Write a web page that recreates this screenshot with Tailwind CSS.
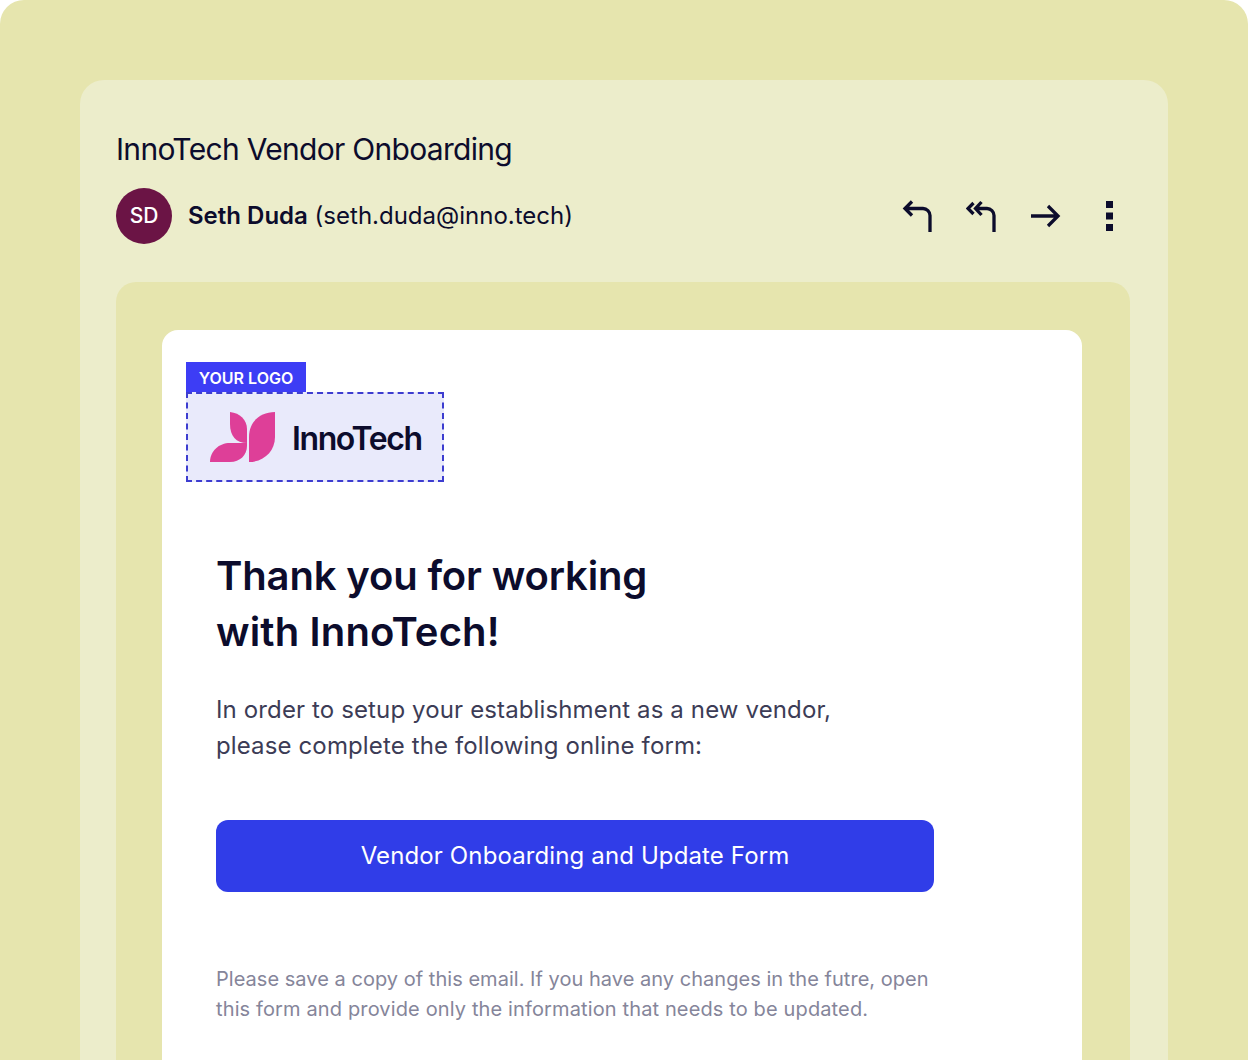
<!DOCTYPE html>
<html lang="en">
<head>
  <meta charset="UTF-8" />
  <meta name="viewport" content="width=device-width, initial-scale=1.0" />
  <title>InnoTech Vendor Onboarding</title>
  <script src="https://cdn.jsdelivr.net/npm/@tailwindcss/browser@4"></script>
</head>
<body class="bg-white font-['Inter',sans-serif] text-[#0c0c2c]">
  <div class="h-[1060px] overflow-hidden rounded-t-3xl bg-[#e6e5ae] px-20 pt-20">
    <div class="h-[1100px] rounded-t-3xl bg-[#ecedcb] px-9 pt-[47px]">
      <h1 class="text-[30px] leading-[44px] tracking-[-0.7px]">InnoTech Vendor Onboarding</h1>

      <!-- sender row -->
      <div class="mt-[17px] flex h-14 items-center pr-1.5">
        <div class="flex h-14 w-14 items-center justify-center rounded-full bg-[#6b1445] text-[21px] font-medium text-white">SD</div>
        <p class="ml-4 text-2xl"><span class="font-semibold">Seth Duda</span> (seth.duda@inno.tech)</p>
        <div class="ml-auto flex items-center">
          <svg class="h-8 w-8" viewBox="0 0 32 32" fill="none" stroke="#0c0c2c" stroke-width="3.300">
            <path d="M10 1.500 3 8.500 10 15.500M4 8.500h17a7 7 0 0 1 7 7V32" />
          </svg>
          <svg class="ml-8 h-8 w-8" viewBox="0 0 32 32" fill="none" stroke="#0c0c2c" stroke-width="3.300">
            <path d="M7.500 3 2 8.500 7.500 14M15.500 2 9.500 8.500 15.500 15M10 8.500h11a7 7 0 0 1 7 7V32" />
          </svg>
          <svg class="ml-8 h-8 w-8" viewBox="0 0 32 32" fill="none" stroke="#0c0c2c" stroke-width="3.300">
            <path d="M1 16h27M18 6l10 10-10 10" />
          </svg>
          <svg class="ml-8 h-8 w-8" viewBox="0 0 32 32" fill="#0c0c2c">
            <path d="M12 1h7v7h-7zM12 12.500h7v7h-7zM12 24h7v7h-7z" />
          </svg>
        </div>
      </div>

      <!-- email preview -->
      <div class="mt-[38px] h-[800px] w-[1014px] rounded-t-[20px] bg-[#e6e5ae] pr-12 pl-[46px] pt-12">
        <div class="h-[760px] rounded-t-2xl bg-white pl-6 pt-8">
          <div class="w-[120px] bg-[#3d3df5] py-[5px] text-center text-base leading-[22px] font-semibold text-white">YOUR LOGO</div>
          <div class="-mt-0.5 flex h-[90px] w-[258px] items-center border-2 border-dashed border-[#3d3dd0] bg-[#e9eafb] pl-[22px]">
            <svg class="h-[50px] w-[65px]" viewBox="0 0 65 50" fill="#de3f98">
              <path d="M20 0C30 1 37 8 37 17V31C26 31 20 24 20 12Z" />
              <path d="M65 0C50 0 39 10 39 25V50C54 50 65 39 65 25Z" />
              <path d="M0 50C0 39 9 31 20 31H37V34C37 43 30 50 20 50Z" />
            </svg>
            <span class="mt-1 ml-[17px] text-[32px] leading-[40px] font-semibold tracking-[-1.4px]">InnoTech</span>
          </div>

          <div class="pl-[30px]">
            <h2 class="mt-[66px] text-[40px] leading-[56px] font-semibold"><span class="tracking-[-0.15px]">Thank you for working</span><br /><span class="tracking-[0.15px]">with InnoTech!</span></h2>
            <p class="mt-8 text-2xl leading-9 tracking-[0.13px] text-[#3c3c56]">In order to setup your establishment as a new vendor,<br />please complete the following online form:</p>
            <div class="mt-[56px] flex h-[72px] w-[718px] items-center justify-center rounded-xl bg-[#303de8] text-2xl tracking-[0.12px] text-white">Vendor Onboarding and Update Form</div>
            <p class="mt-[72px] text-[20px] leading-[30px] text-[#85859a]"><span class="tracking-[0.03px]">Please save a copy of this email. If you have any changes in the futre, open</span><br /><span class="tracking-[0.13px]">this form and provide only the information that needs to be updated.</span></p>
          </div>
        </div>
      </div>
    </div>
  </div>
</body>
</html>
